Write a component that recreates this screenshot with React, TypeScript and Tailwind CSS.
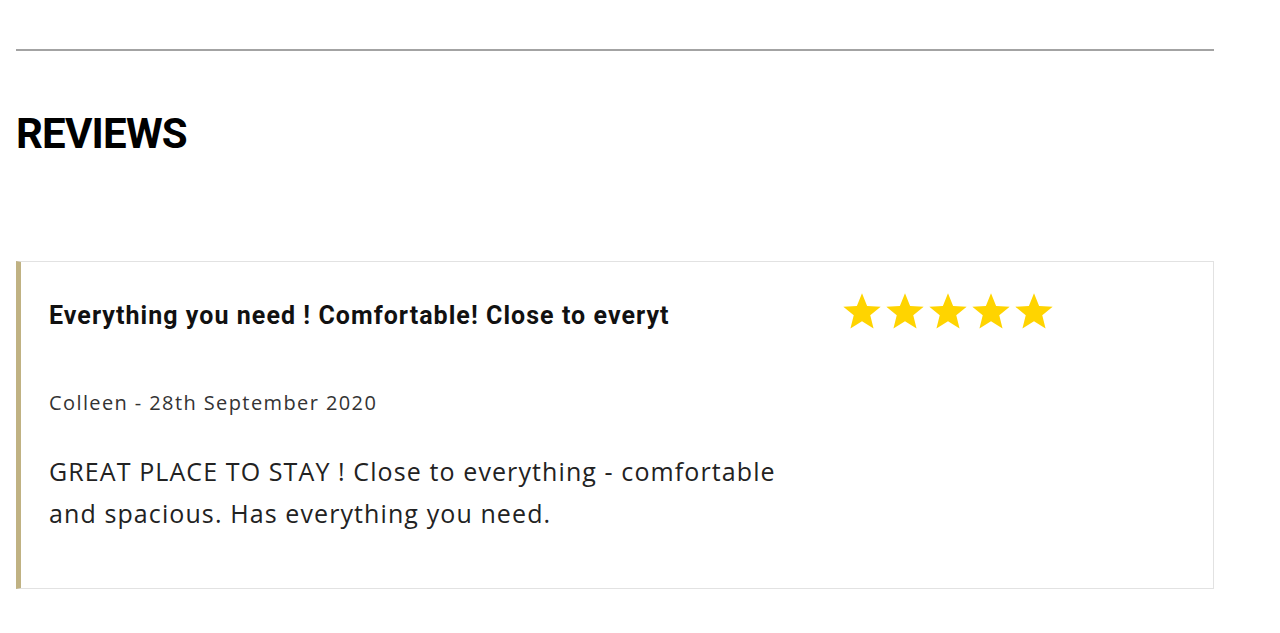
import React from "react";

function Star() {
  return (
    <svg width="40" height="38" viewBox="0 0 24 23" className="block">
      <path d="M12 0.8l3.1 7.6 8.2 0.5-6.3 5.2 2 8-7-4.4-7 4.4 2-8L0.7 8.9l8.2-0.5z" fill="#ffd400" />
    </svg>
  );
}

export default function App() {
  return (
    <div className="min-h-[633px] bg-white pl-4 pt-[49px]">
      <div className="w-[1198px]">
        <div className="h-[2px] bg-[#a3a3a3]" />
        <h2
          className="mt-[58px] text-[42px] leading-[50px] font-bold text-black tracking-[-0.8px]"
          style={{ fontFamily: "Roboto, 'Liberation Sans', sans-serif" }}
        >
          REVIEWS
        </h2>
        <div className="mt-[102px] h-[328px] border border-[#e2e2e2] border-l-[5px] border-l-[#c0b283] flex">
          <div className="w-[790px] pl-[28px] pt-[38px]">
            <div
              className="whitespace-nowrap text-[25px] leading-[32px] font-bold text-[#111] tracking-[1.05px]"
              style={{ fontFamily: "Roboto, 'Liberation Sans', sans-serif" }}
            >
              Everything you need ! Comfortable! Close to everyt
            </div>
            <div
              className="mt-[58px] text-[20px] leading-[26px] text-[#333] tracking-[1.4px]"
              style={{ fontFamily: "'Open Sans', 'Noto Sans', sans-serif" }}
            >
              Colleen - 28th September 2020
            </div>
            <p
              className="mt-[34px] w-[750px] text-[25px] leading-[42px] text-[#222] tracking-[1.1px]"
              style={{ fontFamily: "'Open Sans', 'Noto Sans', sans-serif" }}
            >
              GREAT PLACE TO STAY ! Close to everything - comfortable and spacious. Has everything you need.
            </p>
          </div>
          <div className="pt-[30px] pl-[31px] flex gap-[3px] h-fit">
            <Star />
            <Star />
            <Star />
            <Star />
            <Star />
          </div>
        </div>
      </div>
    </div>
  );
}
